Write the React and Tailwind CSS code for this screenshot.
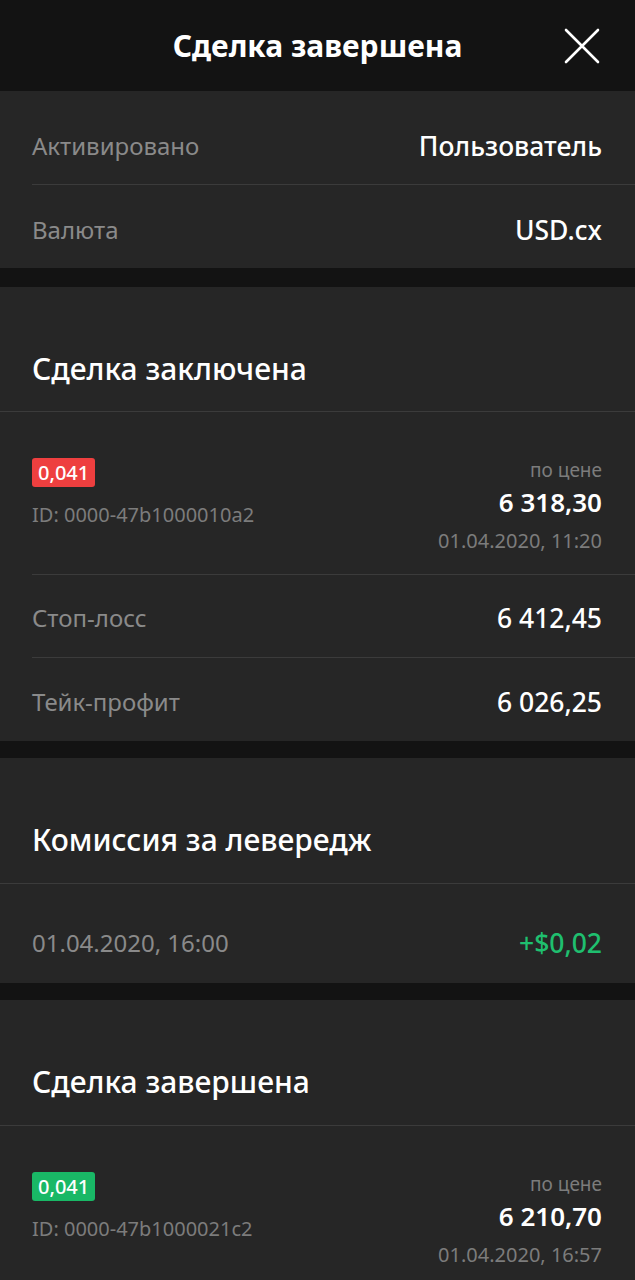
const font = { fontFamily: '"Noto Sans", "Open Sans", sans-serif' };

const InfoRow = ({ label, value, valueClass = "text-white", divider = true, className = "pt-[31px] pb-[27px]" }) => (
  <div className="pl-8">
    <div className={`flex items-center justify-between pr-[33px] ${className}`}>
      <span className="text-[24px] leading-6 text-[#8a8a8a]">{label}</span>
      <span className={`text-[26.5px] leading-6 font-medium ${valueClass}`}>{value}</span>
    </div>
    {divider && <div className="h-px bg-[#3b3b3b]" />}
  </div>
);

const SectionHeader = ({ title, className = "pb-[25px]" }) => (
  <div>
    <h2 className={`px-8 pt-[66px] text-[30px] leading-8 font-medium text-white ${className}`}>{title}</h2>
    <div className="h-px bg-[#3b3b3b]" />
  </div>
);

const TradeRow = ({ amount, color, id, price, date, divider = true }) => (
  <div className="pl-8">
    <div className="flex justify-between pr-[33px] pt-[46px] pb-[20px]">
      <div className="flex flex-col items-start">
        <span className={`${color} rounded-[3px] px-[6px] h-[29px] flex items-center text-[20px] font-medium text-white`}>
          {amount}
        </span>
        <span className="mt-[15px] text-[20px] leading-[26px] text-[#7c7c7c]">ID: {id}</span>
      </div>
      <div className="flex flex-col items-end">
        <span className="text-[19px] leading-6 text-[#7c7c7c]">по цене</span>
        <span className="mt-[5px] text-[26px] leading-[30px] font-semibold text-white">{price}</span>
        <span className="mt-[11px] text-[20px] leading-[26px] text-[#7c7c7c]">{date}</span>
      </div>
    </div>
    {divider && <div className="h-px bg-[#3b3b3b]" />}
  </div>
);

const App = () => {
  return (
    <div className="min-h-[1280px] bg-[#131313]" style={font}>
      <header className="h-[91px] grid grid-cols-[1fr_auto_1fr] items-center">
        <div />
        <h1 className="text-[30px] font-bold text-white">Сделка завершена</h1>
        <div className="flex justify-end pr-[35px]">
          <svg width="36" height="36" viewBox="0 0 36 36" fill="none" stroke="white" strokeWidth="2.6" strokeLinecap="round">
            <path d="M2 2L34 34M34 2L2 34" />
          </svg>
        </div>
      </header>

      <section className="bg-[#262626] pt-[10px]">
        <InfoRow label="Активировано" value="Пользователь" className="pt-[33px] pb-[26px]" />
        <InfoRow label="Валюта" value="USD.cx" divider={false} className="pt-[33px] pb-[26px]" />
      </section>

      <section className="mt-[19px] bg-[#262626]">
        <SectionHeader title="Сделка заключена" className="pb-[26px]" />
        <TradeRow amount="0,041" color="bg-[#ee3f3f]" id="0000-47b1000010a2" price="6 318,30" date="01.04.2020, 11:20" />
        <InfoRow label="Стоп-лосс" value="6 412,45" />
        <InfoRow label="Тейк-профит" value="6 026,25" divider={false} className="pt-[32px] pb-[27px]" />
      </section>

      <section className="mt-[17px] bg-[#262626]">
        <SectionHeader title="Комиссия за левередж" className="pb-[27px]" />
        <InfoRow
          label="01.04.2020, 16:00"
          value="+$0,02"
          valueClass="text-[#1fbf6f]"
          divider={false}
          className="pt-[47px] pb-[28px]"
        />
      </section>

      <section className="mt-[17px] bg-[#262626]">
        <SectionHeader title="Сделка завершена" className="pb-[27px]" />
        <TradeRow amount="0,041" color="bg-[#19b866]" id="0000-47b1000021c2" price="6 210,70" date="01.04.2020, 16:57" divider={false} />
      </section>
    </div>
  );
};

export default App;
